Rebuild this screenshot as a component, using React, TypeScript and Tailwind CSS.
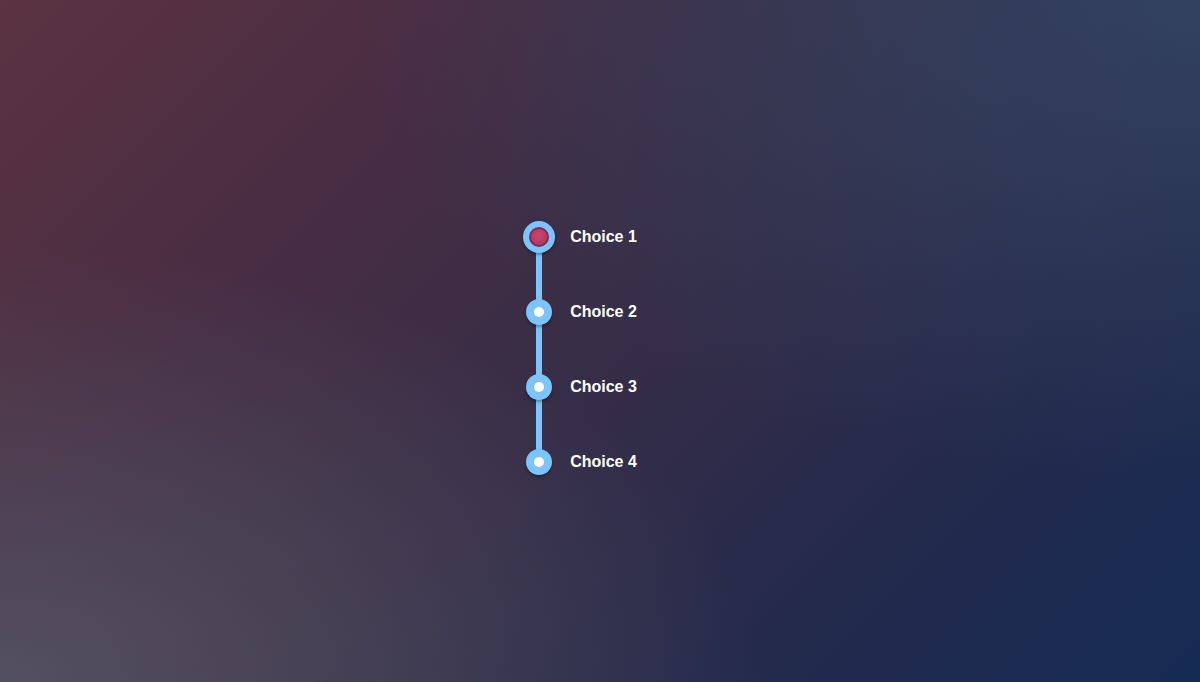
import React from 'react';

const choices = ['Choice 1', 'Choice 2', 'Choice 3', 'Choice 4'];

// Step node on the rail; the active one gets the red core
const Node: React.FC<{ active?: boolean }> = ({ active }) =>
  active ? (
    <div className="relative z-10 w-8 h-8 rounded-full bg-[#7cc4fc] flex items-center justify-center shadow-[0_2px_3px_rgba(0,0,0,0.35)]">
      <div className="w-5 h-5 rounded-full border-2 border-[#86294c] bg-[radial-gradient(circle_at_50%_40%,#cf4672,#ab315c)]"></div>
    </div>
  ) : (
    <div className="relative z-10 w-[26px] h-[26px] rounded-full bg-[#7cc4fc] flex items-center justify-center shadow-[0_2px_3px_rgba(0,0,0,0.35)]">
      <div className="w-2.5 h-2.5 rounded-full bg-white"></div>
    </div>
  );

export default function App() {
  return (
    <div className="min-h-screen w-full flex items-center justify-center pr-10 pt-[17px] bg-[radial-gradient(ellipse_at_0%_100%,rgba(84,82,96,0.95)_0%,rgba(84,82,96,0)_45%),radial-gradient(ellipse_at_100%_0%,rgba(50,68,98,0.9)_0%,rgba(50,68,98,0)_50%),linear-gradient(135deg,#5b3341_0%,#4a2d43_25%,#372d47_50%,#242a4c_75%,#152b54_100%)]">
      <ul className="relative flex flex-col gap-[43px]" style={{ fontFamily: '"Liberation Sans", Arial, sans-serif' }}>
        {/* rail joining the first and last node */}
        <div className="absolute left-[13px] top-4 bottom-4 w-1.5 bg-[#7cc4fc]"></div>
        {choices.map((c, i) => (
          <li key={c} className="flex items-center h-8 gap-[15px]">
            <div className="w-8 flex items-center justify-center">
              <Node active={i === 0} />
            </div>
            <span className="text-white font-bold text-base leading-none">{c}</span>
          </li>
        ))}
      </ul>
    </div>
  );
}
